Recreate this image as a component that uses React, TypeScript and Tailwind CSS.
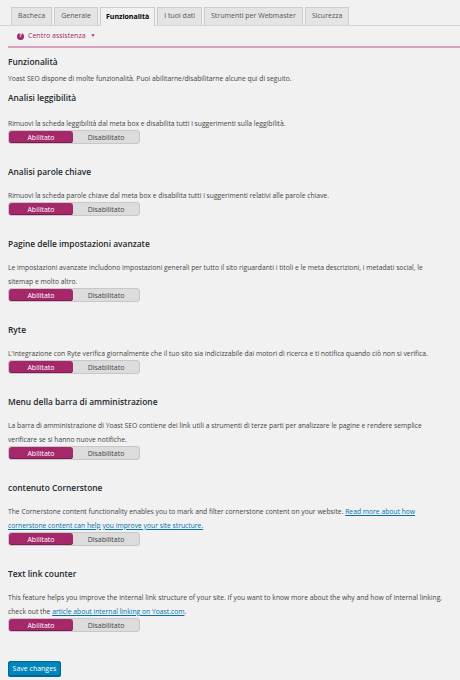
import React from 'react';

const font = { fontFamily: '"Open Sans", "Noto Sans", sans-serif' };

interface FeatureProps {
    title: string;
    children: React.ReactNode;
}

const tabs = ['Bacheca', 'Generale', 'Funzionalità', 'I tuoi dati', 'Strumenti per Webmaster', 'Sicurezza'];

const Toggle: React.FC = () => (
    <div className="mt-[-1px] flex h-[14px] w-[132px] rounded-[3px] border border-[#c8c8c8] bg-[#dcdcdc] text-[7px] leading-none">
        <div className="flex w-[64px] items-center justify-center rounded-[3px] bg-[#a4286a] text-white shadow-[inset_0_-1px_0_#7e1b52]">Abilitato</div>
        <div className="flex flex-1 items-center justify-center text-[#444]">Disabilitato</div>
    </div>
);

const Feature: React.FC<FeatureProps> = ({ title, children }) => (
    <div className="mt-[20px]">
        <h2 className="text-[8.4px] font-semibold leading-[16px] text-[#23282d]">{title}</h2>
        <p className="mt-[9px] text-[6.75px] leading-[14px] text-[#444]">{children}</p>
        <Toggle />
    </div>
);

export default function App() {
    return (
        <div className="min-h-[680px] w-[460px] bg-[#f1f1f1] pb-4" style={font}>
            {/* tabs */}
            <div className="flex h-[26px] items-end gap-[2px] border-b border-[#d4d4d4] pl-[11px] pt-[8px]">
                {tabs.map((t) => (
                    t === 'Funzionalità' ? (
                        <div key={t} className="relative -mb-px flex h-[19px] items-center border border-b-0 border-[#ccc] bg-[#f1f1f1] px-[5px] text-[7px] font-bold text-black">{t}</div>
                    ) : (
                        <div key={t} className="flex h-[18px] items-center border border-b-0 border-[#ccc] bg-[#e4e4e4] px-[6px] text-[7px] text-[#555]">{t}</div>
                    )
                ))}
            </div>
            {/* help */}
            <div className="ml-[8px] flex h-[22px] items-center border-b-2 border-[#d8a2bf] pl-[9px] text-[7px] text-[#a4286a]">
                <span className="flex h-[7px] w-[7px] items-center justify-center rounded-full bg-[#a4286a] text-[5.5px] font-bold leading-none text-white">?</span>
                <span className="ml-[4px]">Centro assistenza</span>
                <span className="ml-[5px] text-[5px]">▼</span>
            </div>

            <div className="pl-[8px] pr-[1px]">
                <h1 className="mt-[6px] text-[8.4px] font-semibold leading-[16px] text-[#23282d]">Funzionalità</h1>
                <p className="mt-[2px] text-[6.75px] leading-[14px] text-[#444]">Yoast SEO dispone di molte funzionalità. Puoi abilitarne/disabilitarne alcune qui di seguito.</p>

                <div className="mt-[4px]">
                    <h2 className="text-[8.4px] font-semibold leading-[16px] text-[#23282d]">Analisi leggibilità</h2>
                    <p className="mt-[11px] text-[6.75px] leading-[14px] text-[#444]">Rimuovi la scheda leggibilità dal meta box e disabilita tutti i suggerimenti sulla leggibilità.</p>
                    <Toggle />
                </div>

                <Feature title="Analisi parole chiave">
                    Rimuovi la scheda parole chiave dal meta box e disabilita tutti i suggerimenti relativi alle parole chiave.
                </Feature>
                <Feature title="Pagine delle impostazioni avanzate">
                    Le impostazioni avanzate includono impostazioni generali per tutto il sito riguardanti i titoli e le meta descrizioni, i metadati social, le<br />
                    sitemap e molto altro.
                </Feature>
                <Feature title="Ryte">
                    L'integrazione con Ryte verifica giornalmente che il tuo sito sia indicizzabile dai motori di ricerca e ti notifica quando ciò non si verifica.
                </Feature>
                <Feature title="Menu della barra di amministrazione">
                    La barra di amministrazione di Yoast SEO contiene dei link utili a strumenti di terze parti per analizzare le pagine e rendere semplice<br />
                    verificare se si hanno nuove notifiche.
                </Feature>
                <Feature title="contenuto Cornerstone">
                    The Cornerstone content functionality enables you to mark and filter cornerstone content on your website.{' '}
                    <a className="text-[#0073aa] underline">Read more about how<br />cornerstone content can help you improve your site structure.</a>
                </Feature>
                <Feature title="Text link counter">
                    This feature helps you improve the internal link structure of your site. If you want to know more about the why and how of internal linking,<br />
                    check out the <a className="text-[#0073aa] underline">article about internal linking on Yoast.com</a>.
                </Feature>

                <button className="mt-[29px] flex h-[15px] w-[53px] items-center justify-center rounded-[2px] border border-[#006799] bg-[#0085ba] text-[7px] leading-none text-white shadow-[0_1px_0_#006799]">
                    Save changes
                </button>
            </div>
        </div>
    );
}
